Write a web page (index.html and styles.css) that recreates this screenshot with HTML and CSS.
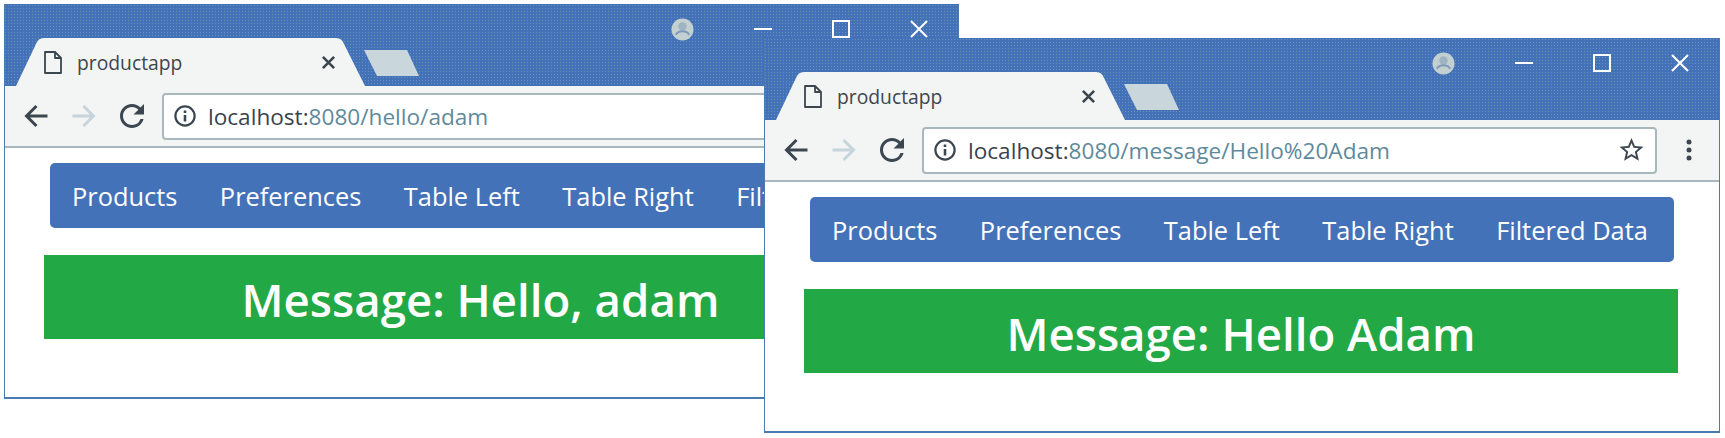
FILE: index.html
```html
<!DOCTYPE html>
<html lang="en">
<head>
    <meta charset="UTF-8">
    <title>productapp</title>
    <link rel="stylesheet" href="styles.css">
</head>
<body>

    <svg class="icon-defs" width="0" height="0">
        <symbol id="i-doc" viewBox="0 0 18 23"><path d="M1 1h10l6 6v15H1zM11 1v6h6" fill="none" stroke="currentColor" stroke-width="1.8" stroke-linejoin="round"/></symbol>
        <symbol id="i-x" viewBox="0 0 16 16"><path d="M2 2l12 12M14 2L2 14" fill="none" stroke="currentColor" stroke-width="2.8"/></symbol>
        <symbol id="i-arrow-left" viewBox="0 0 24 24"><path d="M23.5 12H3M12.5 2L2.5 12l10 10" fill="none" stroke="currentColor" stroke-width="3"/></symbol>
        <symbol id="i-arrow-right" viewBox="0 0 24 24"><path d="M.5 12H21M11.500 2l10 10-10 10" fill="none" stroke="currentColor" stroke-width="3"/></symbol>
        <symbol id="i-reload" viewBox="4 4 16 16"><path d="M17.65 6.350A7.960 7.960 0 0 0 12 4c-4.420 0-7.990 3.580-7.990 8s3.570 8 7.990 8c3.730 0 6.840-2.550 7.730-6h-2.080A6 6 0 0 1 12 18c-3.310 0-6-2.690-6-6s2.690-6 6-6c1.660 0 3.140.690 4.220 1.780L13 11h7V4z" fill="currentColor"/></symbol>
        <symbol id="i-info" viewBox="0 0 24 24"><circle cx="12" cy="12" r="10.500" fill="none" stroke="currentColor" stroke-width="2.400"/><path d="M10.600 6h2.800v2.800h-2.800zM10.600 10.800h2.800V18h-2.800z" fill="currentColor"/></symbol>
        <symbol id="i-star" viewBox="2 2 20 20"><path d="M22 9.240l-7.190-.62L12 2 9.190 8.630 2 9.240l5.460 4.730L5.820 21 12 17.270 18.180 21l-1.630-7.030L22 9.240zM12 15.400l-3.760 2.270 1-4.280-3.320-2.880 4.380-.38L12 6.100l1.710 4.040 4.380.38-3.320 2.880 1 4.280L12 15.400z" fill="currentColor"/></symbol>
        <symbol id="i-menu" viewBox="0 0 6 22"><circle cx="3" cy="3" r="2.500" fill="currentColor"/><circle cx="3" cy="11" r="2.500" fill="currentColor"/><circle cx="3" cy="19" r="2.500" fill="currentColor"/></symbol>
        <symbol id="i-profile" viewBox="0 0 24 24"><circle cx="12" cy="12" r="11.500" fill="#c3d0d2"/><circle cx="12" cy="8.800" r="4.400" fill="#9fb3c1"/><path d="M5 17.500c1.500-2.600 4-3.600 7-3.600s5.500 1 7 3.600" fill="none" stroke="#7f9ab8" stroke-width="2"/></symbol>
        <symbol id="i-min" viewBox="0 0 18 18"><path d="M0 9h18" stroke="currentColor" stroke-width="2"/></symbol>
        <symbol id="i-max" viewBox="0 0 18 18"><path d="M1 1h16v16H1z" fill="none" stroke="currentColor" stroke-width="2"/></symbol>
        <symbol id="i-close" viewBox="0 0 18 18"><path d="M1 1l16 16M17 1L1 17" fill="none" stroke="currentColor" stroke-width="2"/></symbol>
    </svg>

    <div class="window window-back">
        <div class="titlebar">
            <div class="tab">
                <svg class="tab-doc"><use href="#i-doc"/></svg>
                <span class="tab-title">productapp</span>
                <svg class="tab-close"><use href="#i-x"/></svg>
            </div>
            <div class="new-tab"></div>
            <div class="controls">
                <svg class="ctl-profile"><use href="#i-profile"/></svg>
                <svg class="ctl"><use href="#i-min"/></svg>
                <svg class="ctl"><use href="#i-max"/></svg>
                <svg class="ctl"><use href="#i-close"/></svg>
            </div>
        </div>
        <div class="toolbar">
            <svg class="tool"><use href="#i-arrow-left"/></svg>
            <svg class="tool tool-off"><use href="#i-arrow-right"/></svg>
            <svg class="tool"><use href="#i-reload"/></svg>
            <div class="address">
                <svg class="info"><use href="#i-info"/></svg>
                <span class="url"><span class="host">localhost:</span>8080/hello/adam</span>
                <svg class="star"><use href="#i-star"/></svg>
            </div>
            <svg class="menu"><use href="#i-menu"/></svg>
        </div>
        <div class="content">
            <div class="nav">
                <a>Products</a>
                <a>Preferences</a>
                <a>Table Left</a>
                <a>Table Right</a>
                <a>Filtered Data</a>
            </div>
            <h1 class="message">Message: Hello, adam</h1>
        </div>
    </div>

    <div class="window window-front">
        <div class="titlebar">
            <div class="tab">
                <svg class="tab-doc"><use href="#i-doc"/></svg>
                <span class="tab-title">productapp</span>
                <svg class="tab-close"><use href="#i-x"/></svg>
            </div>
            <div class="new-tab"></div>
            <div class="controls">
                <svg class="ctl-profile"><use href="#i-profile"/></svg>
                <svg class="ctl"><use href="#i-min"/></svg>
                <svg class="ctl"><use href="#i-max"/></svg>
                <svg class="ctl"><use href="#i-close"/></svg>
            </div>
        </div>
        <div class="toolbar">
            <svg class="tool"><use href="#i-arrow-left"/></svg>
            <svg class="tool tool-off"><use href="#i-arrow-right"/></svg>
            <svg class="tool"><use href="#i-reload"/></svg>
            <div class="address">
                <svg class="info"><use href="#i-info"/></svg>
                <span class="url"><span class="host">localhost:</span>8080/message/Hello%20Adam</span>
                <svg class="star"><use href="#i-star"/></svg>
            </div>
            <svg class="menu"><use href="#i-menu"/></svg>
        </div>
        <div class="content">
            <div class="nav">
                <a>Products</a>
                <a>Preferences</a>
                <a>Table Left</a>
                <a>Table Right</a>
                <a>Filtered Data</a>
            </div>
            <h1 class="message">Message: Hello Adam</h1>
        </div>
    </div>

</body>
</html>
```

FILE: styles.css
```css
body {
    margin: 0;
    width: 1725px;
    height: 438px;
    overflow: hidden;
    position: relative;
    background-color: #fff;
    font-family: "Open Sans", "Noto Sans", sans-serif;
}

.icon-defs {
    position: absolute;
}

/* the two browser windows lie freely on the picture */
.window {
    position: absolute;
    box-sizing: border-box;
    height: 395px;
    overflow: hidden;
    background-color: #fff;
    border: 1px solid #4a7ab0;
    border-bottom-width: 2px;
    border-top: none;
}

.window-back {
    left: 4px;
    top: 4px;
    width: 955px;
}

.window-front {
    left: 764px;
    top: 38px;
    width: 956px;
}

.titlebar {
    display: flex;
    height: 82px;
    margin: 0 -1px;
    background-color: #4472b8;
    background-image: radial-gradient(rgba(190, 215, 190, 0.3) 0.6px, transparent 0.8px);
    background-size: 3px 3px;
}

.tab {
    display: flex;
    align-items: center;
    box-sizing: border-box;
    flex: none;
    width: 349px;
    height: 48px;
    margin: 34px 0 0 12px;
    padding: 0 29px 0 28px;
    background-color: #f2f5f3;
    clip-path: path("M0 48L20 6Q22 0 28 0L320 0Q326 0 328 6L349 48Z");
    color: #3c4650;
}

.tab-doc {
    width: 18px;
    height: 23px;
}

.tab-title {
    flex: 1;
    margin-left: 15px;
    font-size: 19.3px;
}

.tab-close {
    width: 15px;
    height: 15px;
}

.new-tab {
    flex: none;
    width: 55px;
    height: 26px;
    margin: 46px 0 0 -1px;
    background-color: #c9d6dc;
    clip-path: polygon(0 0, 43px 0, 100% 100%, 13px 100%);
}

.controls {
    display: flex;
    align-items: center;
    gap: 60px;
    height: 50px;
    margin-left: auto;
    padding-right: 31px;
    color: #fff;
}

.ctl {
    width: 18px;
    height: 18px;
}

.ctl-profile {
    width: 23px;
    height: 23px;
}

.toolbar {
    display: flex;
    align-items: center;
    box-sizing: border-box;
    height: 62px;
    padding: 0 27px 0 19px;
    background-color: #f2f5f3;
    border-bottom: 2px solid #a9b8bc;
    color: #3c4650;
}

.tool {
    flex: none;
    width: 24px;
    height: 24px;
    margin-right: 24px;
}

.tool-off {
    color: #c6d4db;
}

.address {
    display: flex;
    align-items: center;
    box-sizing: border-box;
    flex: 1;
    height: 47px;
    margin-left: -6px;
    padding: 0 11px 0 10px;
    background-color: #fff;
    border: 2px solid #a9b8bc;
    border-radius: 4px;
}

.info {
    flex: none;
    width: 22px;
    height: 22px;
}

.url {
    flex: 1;
    margin-left: 12px;
    font-size: 22.6px;
    white-space: nowrap;
    color: #5f8a9b;
}

.host {
    color: #39434c;
}

.star {
    flex: none;
    width: 25px;
    height: 24px;
}

.menu {
    flex: none;
    width: 6px;
    height: 22px;
    margin-left: 29px;
}

.content {
    padding: 15px 41px 0 39px;
}

.nav {
    display: flex;
    align-items: center;
    gap: 42.5px;
    height: 65px;
    margin: 0 4px 0 6px;
    padding-left: 22px;
    background-color: #4472b8;
    border-radius: 5px;
    font-size: 25.4px;
    color: #fff;
    white-space: nowrap;
}

.message {
    margin: 27px 0 0;
    height: 84px;
    line-height: 88px;
    background-color: #23a846;
    color: #fff;
    font-size: 45.6px;
    font-weight: 600;
    text-align: center;
}
```
